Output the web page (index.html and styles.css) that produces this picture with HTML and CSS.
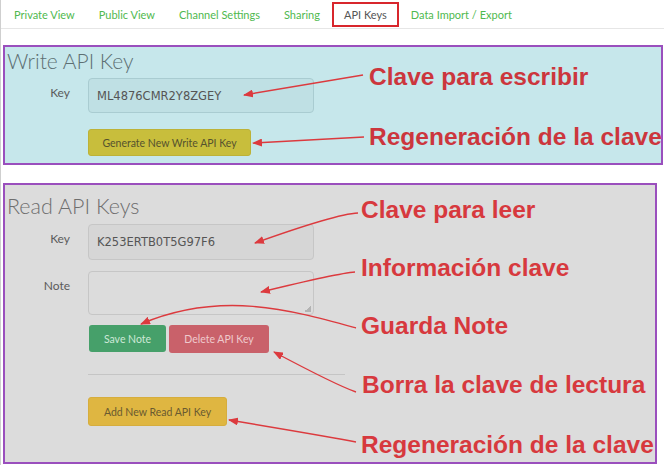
FILE: index.html
```html
<!DOCTYPE html>
<html>
<head>
<meta charset="utf-8">
<link rel="stylesheet" href="styles.css">
</head>
<body>
<div class="page">
  <nav class="tabs">
    <span class="tab">Private View</span>
    <span class="tab">Public View</span>
    <span class="tab">Channel Settings</span>
    <span class="tab">Sharing</span>
    <span class="tab active">API Keys</span>
    <span class="tab">Data Import / Export</span>
  </nav>

  <section class="panel write">
    <h2 class="title title-write">Write API Key</h2>
    <div class="row">
      <label class="lbl">Key</label>
      <div class="field key">ML4876CMR2Y8ZGEY</div>
    </div>
    <div class="row btn-row">
      <span class="btn btn-olive">Generate New Write API Key</span>
    </div>
  </section>

  <section class="panel read">
    <h2 class="title title-read">Read API Keys</h2>
    <div class="row">
      <label class="lbl">Key</label>
      <div class="field key">K253ERTB0T5G97F6</div>
    </div>
    <div class="row note-row">
      <label class="lbl">Note</label>
      <div class="field note"><span class="grip"></span></div>
    </div>
    <div class="row btn-row pair">
      <span class="btn btn-green">Save Note</span>
      <span class="btn btn-red">Delete API Key</span>
    </div>
    <div class="row"><hr class="sep"></div>
    <div class="row btn-row add">
      <span class="btn btn-yellow">Add New Read API Key</span>
    </div>
  </section>

  <div class="note-text n1">Clave para escribir</div>
  <div class="note-text n2">Regeneración de la clave</div>
  <div class="note-text n3">Clave para leer</div>
  <div class="note-text n4">Información clave</div>
  <div class="note-text n5">Guarda Note</div>
  <div class="note-text n6">Borra la clave de lectura</div>
  <div class="note-text n7">Regeneración de la clave</div>

  <svg class="arrows" width="664" height="465" viewBox="0 0 664 465">
    <defs>
      <marker id="ah" markerWidth="10" markerHeight="8" refX="9" refY="4" orient="auto" markerUnits="userSpaceOnUse">
        <path d="M0,0 L10,4 L0,8 Z" fill="#dc3a3e"/>
      </marker>
    </defs>
    <g fill="none" stroke="#dc3a3e" stroke-width="1.4" marker-end="url(#ah)">
      <path d="M362,75 L243,95"/>
      <path d="M363,137 L252,143"/>
      <path d="M357,213 Q335,214 254,243"/>
      <path d="M354,272 Q338,273 260,292"/>
      <path d="M355,328 C290,310 220,290 140,324"/>
      <path d="M355,392 Q335,385 273,352"/>
      <path d="M355,442 Q330,437 228,420"/>
    </g>
  </svg>
</div>
</body>
</html>
```

FILE: styles.css
```css
* { box-sizing: border-box; }
html, body { margin: 0; padding: 0; background: #fff; }
body { font-family: Lato, "Open Sans", sans-serif; }

.page {
  position: relative;
  width: 664px;
  height: 465px;
  border-left: 1px solid #cfcfcf;
  overflow: hidden;
}

.tabs {
  display: flex;
  gap: 0;
  height: 29px;
  padding: 2px 0 0 1px;
  border-bottom: 1px solid #e6e6e6;
}
.tab {
  display: flex;
  align-items: center;
  height: 25px;
  padding: 0 10px;
  border: 2px solid transparent;
  font-size: 11px;
  color: #4fb94f;
}
.tab.active {
  border-color: #d8262c;
  color: #555;
  background: #fff;
  margin-bottom: -1px;
}

.panel {
  margin-left: 2px;
  border: 2px solid #9a4fbd;
}
.panel.write {
  margin-top: 16px;
  width: 660px;
  height: 120px;
  padding: 2px 0 0 0;
  background: #c6e7eb;
}
.panel.read {
  margin-top: 18px;
  width: 654px;
  height: 281px;
  padding: 9px 0 0 0;
  background: #dcdcdc;
}

.title {
  margin: 0 0 0 2px;
  font-weight: 300;
  color: #5d6f73;
}
.title-write { font-size: 21px; line-height: 23px; }
.title-read { font-size: 21.5px; line-height: 25px; color: #6e6e6e; }

.row {
  display: flex;
  align-items: flex-start;
  padding-left: 83px;
  position: relative;
}
.lbl {
  position: absolute;
  left: 0;
  width: 65px;
  text-align: right;
  padding-top: 7px;
  font-size: 12px;
  line-height: 16px;
  color: #5b5b5b;
}
.write .row:nth-of-type(1) { margin-top: 6px; }
.read .row:nth-of-type(1) { margin-top: 5px; }

.field {
  width: 226px;
  border-radius: 4px;
}
.key {
  height: 35px;
  padding: 0 0 0 8px;
  display: flex;
  align-items: center;
  font-family: "DejaVu Sans", sans-serif;
  font-size: 11.5px;
  color: #555;
}
.write .field { background: #bfe0e4; border: 1px solid #a9ccd1; }
.read .field { background: #d6d6d6; border: 1px solid #c6c6c6; }
.read .key { height: 36px; }

.note-row { margin-top: 11px; }
.note { height: 44px; position: relative; background: #dcdcdc !important; }
.grip {
  position: absolute;
  right: 2px;
  bottom: 2px;
  width: 7px;
  height: 7px;
  background: linear-gradient(135deg, transparent 50%, #b3b3b3 50%);
}

.btn {
  display: flex;
  align-items: center;
  justify-content: center;
  border-radius: 3px;
  font-size: 10.5px;
}
.write .btn-row { margin-top: 16px; }
.btn-olive {
  width: 163px; height: 27px;
  background: #c8be3c;
  color: #55522e;
  border: 1px solid #bdb237;
}
.pair { margin-top: 10px; gap: 3px; padding-left: 84px; }
.btn-green {
  width: 77px; height: 27px;
  background: #46a06a;
  color: #cde8d6;
}
.btn-red {
  width: 100px; height: 28px;
  background: #c9616a;
  color: #efc9cc;
}
.sep {
  width: 257px;
  margin: 21px 0 0 0;
  border: 0;
  border-top: 1px solid #c5c5c5;
  height: 0;
}
.add { margin-top: 22px; }
.btn-yellow {
  width: 139px; height: 29px;
  background: #dfb641;
  color: #6a5a30;
  border: 1px solid #d6ad3d;
}

.note-text {
  position: absolute;
  font-family: "Liberation Sans", Arial, sans-serif;
  font-weight: bold;
  font-size: 24.5px;
  line-height: 28px;
  color: #d7393e;
  white-space: nowrap;
}
.n1 { left: 368px; top: 63px; color: #cc363d; }
.n2 { left: 368px; top: 123px; color: #cc363d; }
.n3 { left: 360px; top: 196px; }
.n4 { left: 360px; top: 254px; }
.n5 { left: 360px; top: 312px; }
.n6 { left: 361px; top: 371px; }
.n7 { left: 360px; top: 431px; }

.arrows {
  position: absolute;
  left: 0;
  top: 0;
}
```
